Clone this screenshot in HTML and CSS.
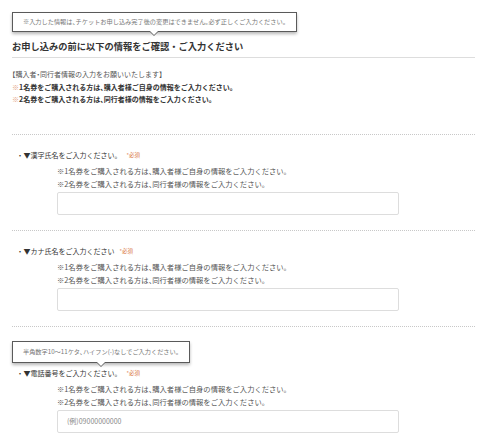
FILE: index.html
```html
<!DOCTYPE html>
<html lang="ja">
<head>
<meta charset="utf-8">
<title>お申し込み情報</title>
<link rel="stylesheet" href="styles.css">
</head>
<body>
<div class="page">
  <div class="tip tip-top">※入力した情報は、チケットお申し込み完了後の変更はできません。必ず正しくご入力ください。</div>
  <h2 class="heading">お申し込みの前に以下の情報をご確認・ご入力ください</h2>
  <div class="intro">
    <p class="intro-lead">【購入者・同行者情報の入力をお願いいたします】</p>
    <p class="intro-strong"><span class="kome">※</span>1名券をご購入される方は、購入者様ご自身の情報をご入力ください。</p>
    <p class="intro-strong"><span class="kome">※</span>2名券をご購入される方は、同行者様の情報をご入力ください。</p>
  </div>

  <div class="field">
    <div class="label">・▼漢字氏名をご入力ください。<span class="req">*必須</span></div>
    <div class="notes">
      <p>※1名券をご購入される方は<span class="pn">、</span>購入者様ご自身の情報をご入力ください。</p>
      <p>※2名券をご購入される方は<span class="pn">、</span>同行者様の情報をご入力ください。</p>
      <input class="input" type="text">
    </div>
  </div>

  <div class="field">
    <div class="label">・▼カナ氏名をご入力ください<span class="req">*必須</span></div>
    <div class="notes">
      <p>※1名券をご購入される方は<span class="pn">、</span>購入者様ご自身の情報をご入力ください。</p>
      <p>※2名券をご購入される方は<span class="pn">、</span>同行者様の情報をご入力ください。</p>
      <input class="input" type="text">
    </div>
  </div>

  <div class="field field-tip">
    <div class="tip tip-field">半角数字10～11ケタ、ハイフン(-)なしでご入力ください。</div>
    <div class="label">・▼電話番号をご入力ください。<span class="req">*必須</span></div>
    <div class="notes">
      <p>※1名券をご購入される方は<span class="pn">、</span>購入者様ご自身の情報をご入力ください。</p>
      <p>※2名券をご購入される方は<span class="pn">、</span>同行者様の情報をご入力ください。</p>
      <input class="input" type="text" placeholder="(例)09000000000">
    </div>
  </div>
</div>
</body>
</html>
```

FILE: styles.css
```css
* { box-sizing: border-box; }
html, body { margin: 0; padding: 0; background: #fff; }
body {
  font-family: "Noto Sans CJK JP", "Noto Sans", sans-serif;
  font-feature-settings: "halt";
  color: #333;
}
p { margin: 0; }

.page {
  width: 488px;
  padding: 12px 13px 0 12px;
}

.tip {
  position: relative;
  width: fit-content;
  background: #fff;
  border: 1px solid #5a5a5a;
  box-shadow: 0 2px 3px rgba(0,0,0,0.28);
  color: #777;
  font-size: 6.2px;
  line-height: 8px;
  padding: 5px 10px;
  white-space: nowrap;
}
.tip::before,
.tip::after {
  content: "";
  position: absolute;
  left: 50%;
  width: 0;
  height: 0;
  border-style: solid;
}
.tip::before {
  top: 100%;
  margin-left: -5px;
  border-width: 5px 5px 0 5px;
  border-color: #5a5a5a transparent transparent transparent;
}
.tip::after {
  top: 100%;
  margin-left: -4px;
  border-width: 4px 4px 0 4px;
  border-color: #fff transparent transparent transparent;
}
.tip-top { height: 20px; padding-top: 5px; }
.tip-field { height: 22px; padding-top: 6px; }

.heading {
  margin: 7px 0 0 0;
  font-size: 9.25px;
  line-height: 14px;
  font-weight: 700;
  font-feature-settings: normal;
  color: #333;
  padding-bottom: 4px;
  border-bottom: 1px solid #ddd;
}

.intro {
  margin-top: 10px;
  font-size: 7px;
  line-height: 12.5px;
  padding-bottom: 28px;
  border-bottom: 1px dotted #c8c8c8;
}
.intro-lead { color: #555; }
.intro-strong { font-weight: 700; color: #333; }
.kome { color: #e3a07e; font-weight: 400; }

.field {
  padding: 14px 0 15px 0;
  border-bottom: 1px dotted #c8c8c8;
}
.field-tip { padding-top: 14px; }

.label {
  font-size: 7px;
  line-height: 12px;
  color: #333;
  padding-left: 4.5px;
  font-feature-settings: normal;
}
.field-tip .label { margin-top: 4px; }

.req {
  font-size: 5.5px;
  color: #d8703c;
  margin-left: 5px;
  vertical-align: 1px;
}

.notes {
  margin-left: 45px;
  margin-top: 4px;
  font-size: 7.3px;
  line-height: 13.5px;
  color: #555;
  font-feature-settings: normal;
}
.pn { font-feature-settings: "halt"; }

.input {
  display: block;
  width: 342px;
  height: 23px;
  margin: 0;
  border: 1px solid #ddd;
  border-radius: 2px;
  background: #fff;
  padding: 0 9px;
  font-family: "Noto Sans CJK JP", "Noto Sans", sans-serif;
  font-size: 7px;
  color: #333;
  outline: none;
}
.input::placeholder { color: #888; }
```
